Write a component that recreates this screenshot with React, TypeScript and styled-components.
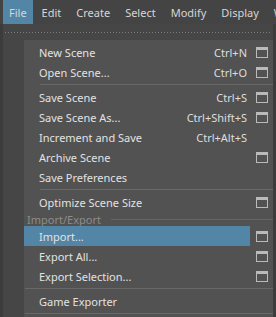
import React, { FC } from 'react'
import styled, { createGlobalStyle } from 'styled-components'

const highlight = '#5285a6'
const font_ui = "'Noto Sans', 'DejaVu Sans', sans-serif"

type Item =
  | { kind: 'item'; label: string; shortcut?: string; box?: boolean; active?: boolean }
  | { kind: 'sep'; full?: boolean }
  | { kind: 'header'; label: string }

const items: Item[] = [
  { kind: 'item', label: 'New Scene', shortcut: 'Ctrl+N', box: true },
  { kind: 'item', label: 'Open Scene...', shortcut: 'Ctrl+O', box: true },
  { kind: 'sep' },
  { kind: 'item', label: 'Save Scene', shortcut: 'Ctrl+S', box: true },
  { kind: 'item', label: 'Save Scene As...', shortcut: 'Ctrl+Shift+S', box: true },
  { kind: 'item', label: 'Increment and Save', shortcut: 'Ctrl+Alt+S' },
  { kind: 'item', label: 'Archive Scene', box: true },
  { kind: 'item', label: 'Save Preferences' },
  { kind: 'sep' },
  { kind: 'item', label: 'Optimize Scene Size', box: true },
  { kind: 'header', label: 'Import/Export' },
  { kind: 'item', label: 'Import...', box: true, active: true },
  { kind: 'item', label: 'Export All...', box: true },
  { kind: 'item', label: 'Export Selection...', box: true },
  { kind: 'sep', full: true },
  { kind: 'item', label: 'Game Exporter' },
  { kind: 'sep', full: true },
]

const menus = ['File', 'Edit', 'Create', 'Select', 'Modify', 'Display', 'Windows']

export default function App() {
  return (
    <>
      <GlobalStyle />
      <Page>
        <MenuBar>
          {menus.map((m, i) => (
            <BarItem key={m} $open={i === 0}>
              {m}
            </BarItem>
          ))}
        </MenuBar>
        <Stage>
          <Menu>
            <TearOff>
              <Dots />
            </TearOff>
            <Items>
              {items.map((it, i) => {
                if (it.kind === 'sep') return <Separator key={i} $full={it.full} />
                if (it.kind === 'header')
                  return (
                    <Header key={i}>
                      <span>{it.label}</span>
                      <HeaderLine />
                    </Header>
                  )
                return <MenuRow key={i} {...it} />
              })}
            </Items>
          </Menu>
        </Stage>
      </Page>
    </>
  )
}

const MenuRow: FC<{ label: string; shortcut?: string; box?: boolean; active?: boolean }> = ({
  label,
  shortcut,
  box,
  active,
}) => (
  <Row>
    <RowMain $active={active}>
      <span>{label}</span>
      {shortcut && <Shortcut>{shortcut}</Shortcut>}
    </RowMain>
    <BoxCell>{box && <OptionBox />}</BoxCell>
  </Row>
)

const GlobalStyle = createGlobalStyle`
  html, body {
    margin: 0;
    padding: 0;
    background: #3c3c3c;
  }
  body {
    font-family: ${font_ui};
    font-size: 11px;
  }
`

const Page = styled.div`
  width: 276px;
  height: 317px;
  overflow: hidden;
  background: #3c3c3c;
  display: flex;
  flex-direction: column;
`

const MenuBar = styled.div`
  height: 24px;
  background: #444444;
  display: flex;
  gap: 3px;
  padding-left: 3px;
  flex-shrink: 0;
  white-space: nowrap;
  overflow: hidden;
`

const BarItem = styled.div<{ $open?: boolean }>`
  padding: 0 6px;
  display: flex;
  align-items: center;
  color: #d6d6d6;
  background: ${(p) => (p.$open ? highlight : 'transparent')};
`

const Stage = styled.div`
  flex: 1;
  padding-left: 3px;
`

const Menu = styled.div`
  width: 270px;
  height: 100%;
  background: #464646;
  display: flex;
  flex-direction: column;
`

const TearOff = styled.div`
  height: 16px;
  padding: 0 2px;
  display: flex;
  align-items: center;
`

const Dots = styled.div`
  height: 1px;
  width: 100%;
  background: repeating-linear-gradient(to right, #7a7a7a 0 1px, transparent 1px 3px);
`

const Items = styled.div`
  margin-left: 21px;
  flex: 1;
  background: #525252;
  padding-top: 2px;
  color: #e2e2e2;
`

const Row = styled.div`
  height: 20px;
  display: flex;
`

const RowMain = styled.div<{ $active?: boolean }>`
  flex: 1;
  display: flex;
  align-items: center;
  justify-content: space-between;
  padding: 0 3px 0 15px;
  background: ${(p) => (p.$active ? highlight : 'transparent')};
`

const Shortcut = styled.span`
  color: #dedede;
`

const BoxCell = styled.div`
  width: 23px;
  display: flex;
  align-items: center;
  padding-left: 6px;
  box-sizing: border-box;
`

const OptionBox = styled.div`
  width: 12px;
  height: 11px;
  box-sizing: border-box;
  border: 1px solid #bababa;
  border-top-width: 3px;
`

const Separator = styled.div<{ $full?: boolean }>`
  height: 5px;
  box-sizing: border-box;
  padding-top: 2px;
  padding-left: ${(p) => (p.$full ? '1px' : '16px')};

  &::before {
    content: '';
    display: block;
    height: 1px;
    background: #686868;
  }
`

const Header = styled.div`
  height: 14px;
  display: flex;
  align-items: center;
  gap: 10px;
  padding-left: 3px;
  color: #8c8c8c;
`

const HeaderLine = styled.div`
  flex: 1;
  height: 1px;
  background: #646464;
`
